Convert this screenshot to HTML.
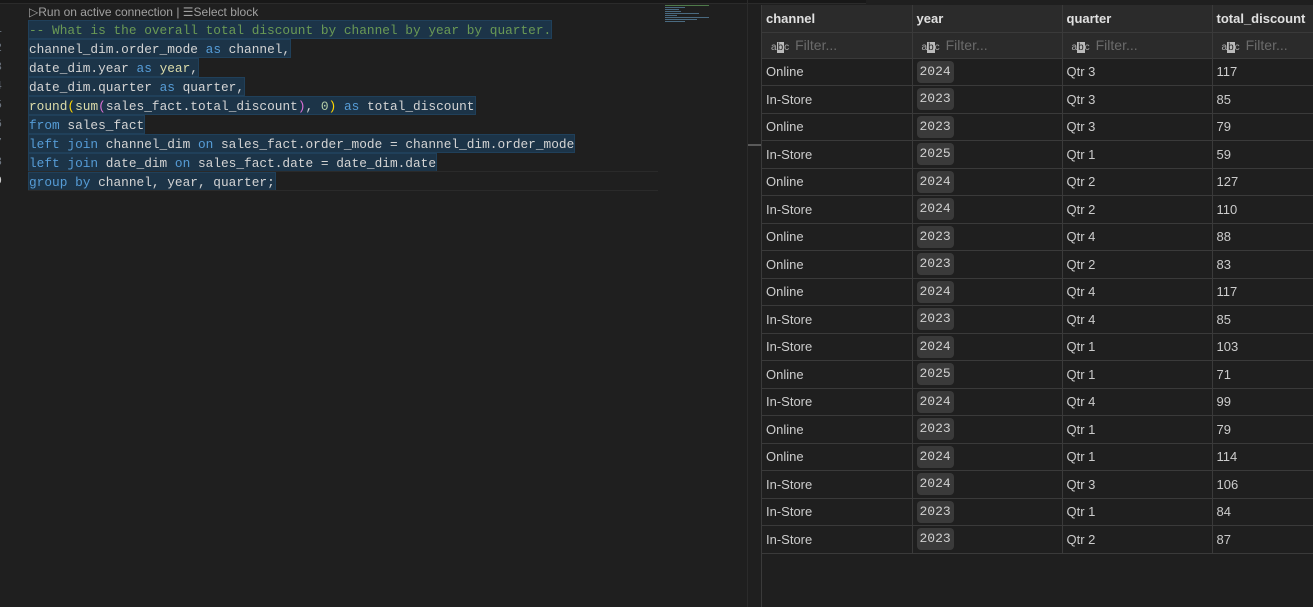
<!DOCTYPE html>
<html><head><style>
*{margin:0;padding:0;box-sizing:border-box}
body{width:1313px;height:607px;background:#1f1f1f;overflow:hidden;position:relative;font-family:"Liberation Sans",sans-serif}
.top{position:absolute;left:0;top:0;width:866px;height:4px;background:#181818;border-bottom:1px solid #2b2b2b}
.lens{position:absolute;left:29px;top:5px;font-size:12px;color:#a0a0a0;white-space:nowrap}
.code{position:absolute;left:0;top:20px;font-family:"Liberation Mono",monospace;font-size:12.8px;color:#d4d4d4}
.ln{position:absolute;left:-8px;width:10px;color:#6e7681;text-align:right;font-size:12px;height:19px;line-height:19px}
.l{position:absolute;left:28px;height:19px;line-height:19px;white-space:pre;background:#1c3448;border:1px solid #20405a}
.cm{color:#6a9955}.kw{color:#569cd6}.fn{color:#dcdcaa}.p1{color:#da70d6}.p2{color:#ffd700}.nm{color:#b5cea8}
.cur{position:absolute;left:28px;top:171px;width:630px;height:20px;border-top:1px solid #2a2a2a;border-bottom:1px solid #2a2a2a}
.vl{position:absolute;left:747px;top:0;width:1px;height:607px;background:#2b2b2b}
.sash{position:absolute;left:748px;top:144px;width:13px;height:2px;background:#5a5a5a}
.grid{position:absolute;left:761px;top:5px;border-left:1px solid #3a3a3a}
table{border-collapse:collapse;table-layout:fixed;width:560px;font-size:13px;color:#cccccc}
td,th{border-right:1px solid #3a3a3a;border-bottom:1px solid #3a3a3a;text-align:left;padding:0 4px;white-space:nowrap;overflow:hidden}
th{height:27px;background:#2b2b2b;font-weight:bold;color:#e0e0e0}
tr.f td{height:26px;background:#2b2b2b;color:#6b6b6b;font-size:14px}
tr.d td{height:27.5px}
.ab{display:inline-block;font-size:10px;color:#aaa;margin:0 6px 0 5px}
.ab b{background:#bbb;color:#222;font-weight:normal;padding:0 1px}
.y{display:inline-block;background:#3a3a3a;border-radius:4px;padding:3px 3px;line-height:16px;font-family:"Liberation Mono",monospace;font-size:13px;color:#d0d0d0}
.mm{position:absolute;left:665px;top:5px;width:45px;height:18px}
.mm i{display:block;height:1px;margin-bottom:1px;background:#4a6a80}
</style></head><body>
<div class="top"></div>
<div class="lens">▷Run on active connection | ☰Select block</div>
<div class="mm"><i style="width:44px;background:#4f7a4a"></i><i style="width:20px"></i><i style="width:14px"></i><i style="width:16px"></i><i style="width:34px"></i><i style="width:12px"></i><i style="width:44px"></i><i style="width:32px"></i><i style="width:20px"></i></div>
<div class="code">
<div class="ln" style="top:0">1</div><div class="ln" style="top:19px">2</div><div class="ln" style="top:38px">3</div><div class="ln" style="top:57px">4</div><div class="ln" style="top:76px">5</div><div class="ln" style="top:95px">6</div><div class="ln" style="top:114px">7</div><div class="ln" style="top:133px">8</div><div class="ln" style="top:152px;color:#ccc">9</div>
<div class="l cm" style="top:0">-- What is the overall total discount by channel by year by quarter.</div>
<div class="l" style="top:19px">channel_dim.order_mode <span class="kw">as</span> channel,</div>
<div class="l" style="top:38px">date_dim.year <span class="kw">as</span> <span class="fn">year</span>,</div>
<div class="l" style="top:57px">date_dim.quarter <span class="kw">as</span> quarter,</div>
<div class="l" style="top:76px"><span class="fn">round</span><span class="p2">(</span><span class="fn">sum</span><span class="p1">(</span>sales_fact.total_discount<span class="p1">)</span>, <span class="nm">0</span><span class="p2">)</span> <span class="kw">as</span> total_discount</div>
<div class="l" style="top:95px"><span class="kw">from</span> sales_fact</div>
<div class="l" style="top:114px"><span class="kw">left join</span> channel_dim <span class="kw">on</span> sales_fact.order_mode = channel_dim.order_mode</div>
<div class="l" style="top:133px"><span class="kw">left join</span> date_dim <span class="kw">on</span> sales_fact.date = date_dim.date</div>
<div class="l" style="top:152px"><span class="kw">group by</span> channel, year, quarter;</div>
</div>
<div class="cur"></div>
<div class="vl"></div><div class="sash"></div>
<div class="grid"><table>
<colgroup><col style="width:150px"><col style="width:150px"><col style="width:150px"><col style="width:110px"></colgroup>
<tr><th>channel</th><th>year</th><th>quarter</th><th>total_discount</th></tr>
<tr class="f"><td><span class="ab">a<b>b</b>c</span>Filter...</td><td><span class="ab">a<b>b</b>c</span>Filter...</td><td><span class="ab">a<b>b</b>c</span>Filter...</td><td><span class="ab">a<b>b</b>c</span>Filter...</td></tr>
<tr class="d"><td>Online</td><td><span class="y">2024</span></td><td>Qtr 3</td><td>117</td></tr>
<tr class="d"><td>In-Store</td><td><span class="y">2023</span></td><td>Qtr 3</td><td>85</td></tr>
<tr class="d"><td>Online</td><td><span class="y">2023</span></td><td>Qtr 3</td><td>79</td></tr>
<tr class="d"><td>In-Store</td><td><span class="y">2025</span></td><td>Qtr 1</td><td>59</td></tr>
<tr class="d"><td>Online</td><td><span class="y">2024</span></td><td>Qtr 2</td><td>127</td></tr>
<tr class="d"><td>In-Store</td><td><span class="y">2024</span></td><td>Qtr 2</td><td>110</td></tr>
<tr class="d"><td>Online</td><td><span class="y">2023</span></td><td>Qtr 4</td><td>88</td></tr>
<tr class="d"><td>Online</td><td><span class="y">2023</span></td><td>Qtr 2</td><td>83</td></tr>
<tr class="d"><td>Online</td><td><span class="y">2024</span></td><td>Qtr 4</td><td>117</td></tr>
<tr class="d"><td>In-Store</td><td><span class="y">2023</span></td><td>Qtr 4</td><td>85</td></tr>
<tr class="d"><td>In-Store</td><td><span class="y">2024</span></td><td>Qtr 1</td><td>103</td></tr>
<tr class="d"><td>Online</td><td><span class="y">2025</span></td><td>Qtr 1</td><td>71</td></tr>
<tr class="d"><td>In-Store</td><td><span class="y">2024</span></td><td>Qtr 4</td><td>99</td></tr>
<tr class="d"><td>Online</td><td><span class="y">2023</span></td><td>Qtr 1</td><td>79</td></tr>
<tr class="d"><td>Online</td><td><span class="y">2024</span></td><td>Qtr 1</td><td>114</td></tr>
<tr class="d"><td>In-Store</td><td><span class="y">2024</span></td><td>Qtr 3</td><td>106</td></tr>
<tr class="d"><td>In-Store</td><td><span class="y">2023</span></td><td>Qtr 1</td><td>84</td></tr>
<tr class="d"><td>In-Store</td><td><span class="y">2023</span></td><td>Qtr 2</td><td>87</td></tr>
</table></div>
<div style="position:absolute;left:761px;top:554px;width:1px;height:53px;background:#3a3a3a"></div>
</body></html>
